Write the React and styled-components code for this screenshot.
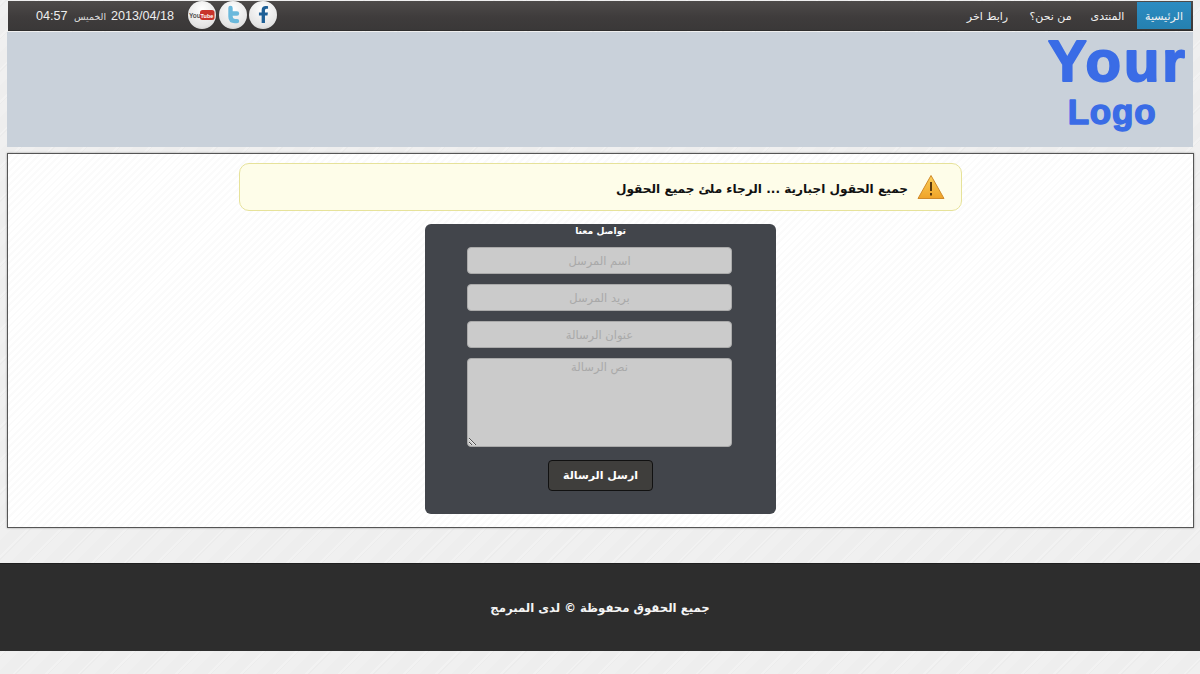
import React from "react";
import styled, { createGlobalStyle } from "styled-components";
import { FaFacebookF } from "react-icons/fa";

const Global = createGlobalStyle`
  html, body { margin: 0; padding: 0; }
  body {
    height: 674px;
    overflow: hidden;
    font-family: "DejaVu Sans", sans-serif;
    background: repeating-linear-gradient(-45deg, #f0f0f0 0 9px, #ececec 9px 10px, #f2f2f2 10px 12px, #eeeeee 12px 23px);
  }
`;
const Page = styled.div`display: flex; flex-direction: column; padding-top: 1px;`;
const TopBar = styled.header`
  height: 30px; margin: 0 7px 0 8px; display: flex; justify-content: space-between; align-items: stretch;
  background: linear-gradient(#4e4b4a, #3f3c3c 55%, #3a3838); border-bottom: 1px solid #2e2d2d; box-sizing: border-box;
`;
const Left = styled.div`display: flex; align-items: center; padding-left: 28px;`;
const Clock = styled.span`font: 12.6px "Liberation Sans", sans-serif; color: #eee; width: 38px; margin-top: 1px;`;
const Day = styled.span`font: 9.5px "DejaVu Sans", sans-serif; color: #ddd; width: 37px; margin-top: 1px;`;
const DateText = styled.span`font: 12.6px "Liberation Sans", sans-serif; color: #eee; width: 77px; margin-top: 1px;`;
const Socials = styled.div`display: flex; gap: 2.5px; margin-top: -2px;`;
const Social = styled.span`
  width: 28px; height: 28px; border-radius: 50%; display: flex; align-items: center; justify-content: center;
  background: radial-gradient(circle at 50% 30%, #fff, #e4e4e4 70%, #bdbdbd); box-shadow: 0 0 1px #222; color: ${p => p.$c};
`;
const Nav = styled.nav`display: flex; align-items: stretch; direction: rtl; padding: 1px 2px 1px 0;`;
const NavItem = styled.a`
  display: flex; align-items: center; justify-content: center; width: ${p => p.$w}px; margin-right: ${p => p.$m || 0}px;
  font: 11px "DejaVu Sans", sans-serif; color: #f2f2f2; white-space: nowrap; padding-top: 2px; box-sizing: border-box;
  background: ${p => (p.$active ? "linear-gradient(#2c8cc2, #2580b0)" : "none")};
`;
const Header = styled.div`
  height: 115px; margin: 1px 7px 0 7px; display: flex; justify-content: flex-end; padding-right: 2px;
  background: #c9d1da;
`;
const LogoArt = styled.svg`display: block; width: 160px; height: 115px;`;
const Main = styled.main`
  height: 375px; box-sizing: border-box; margin: 6px 6px 0 7px; border: 1px solid #555; padding-top: 9px;
  display: flex; flex-direction: column; align-items: center; box-shadow: 0 0 2px #999;
  background: repeating-linear-gradient(-45deg, #fff 0 3px, #fbfbfb 3px 5px);
`;
const Alert = styled.div`
  width: 723px; height: 48px; box-sizing: border-box; border: 1px solid #e6e29a; border-radius: 10px; background: #fefde9;
  display: flex; align-items: center; direction: rtl; padding-right: 16px; gap: 9px;
`;
const AlertText = styled.span`font-size: 12.1px; font-weight: 700; color: #111; padding-top: 3px;`;
const Panel = styled.form`
  width: 351px; height: 290px; box-sizing: border-box; margin-top: 13px; background: #42454b; border-radius: 6px;
  display: flex; flex-direction: column; align-items: center; direction: rtl;
`;
const PanelTitle = styled.div`height: 23px; padding-top: 1px; box-sizing: border-box; font-size: 9.2px; line-height: 12px; font-weight: 700; color: #fff;`;
const fieldCss = `
  width: 265px; box-sizing: border-box; border: 1px solid #aaa; border-radius: 4px; background: #cbcbcb; text-align: center;
  font: 11.5px "DejaVu Sans", sans-serif; padding: 0; outline: none; display: block;
  &::placeholder { color: #a9a9a9; opacity: 1; }
`;
const Input = styled.input`${fieldCss} height: 27px; margin: 0 0 10px 0; margin-right: 2px;`;
const Area = styled.textarea`${fieldCss} height: 89px; padding-top: 1px; resize: vertical; margin: 0; margin-right: 2px;`;
const Send = styled.button`
  width: 105px; height: 31px; margin-top: 13px; box-sizing: border-box; border: 1.5px solid #111; border-radius: 4px;
  background: #3f3e3c; color: #fff; font: 700 11px "DejaVu Sans", sans-serif; padding: 0;
`;
const Footer = styled.footer`
  height: 88px; margin-top: 35px; background: #2d2d2d; display: flex; align-items: center; justify-content: center; direction: rtl;
  border-top: 1px solid #1f1f1f; box-sizing: border-box; color: #f4f4f4; font-size: 11.7px; font-weight: 700;
`;

const TwitterT = () => (
  <svg width="20" height="20" viewBox="0 0 20 20" fill="none" stroke="#6bb9dc" strokeWidth="4.4" strokeLinecap="round">
    <path d="M7.5 3v8.5c0 3 1.6 4.6 4.5 4.6h2M8 8.5h6" />
  </svg>
);
const YouTube = () => (
  <svg width="26" height="14" viewBox="0 0 26 14">
    <text x="0" y="10" fontFamily="Liberation Sans" fontSize="6.5" fontWeight="700" fill="#555">You</text>
    <rect x="11" y="2" width="14.5" height="10" rx="2.5" fill="#c9342c" />
    <text x="11.6" y="9.5" fontFamily="Liberation Sans" fontSize="5.5" fontWeight="700" fill="#fff">Tube</text>
  </svg>
);
const Warn = () => (
  <svg width="28" height="26" viewBox="0 0 28 26">
    <defs>
      <linearGradient id="w" x1="0" y1="0" x2="0" y2="1">
        <stop offset="0" stopColor="#fbcf5a" />
        <stop offset="1" stopColor="#f0a328" />
      </linearGradient>
    </defs>
    <path d="M14 1.5 27 24.5H1Z" fill="url(#w)" stroke="#d08a2a" strokeWidth="1" strokeLinejoin="round" />
    <path d="M14 8v9" stroke="#5a3a10" strokeWidth="2" />
    <path d="M14 19v2.4" stroke="#5a3a10" strokeWidth="2" />
  </svg>
);
const Logo = () => (
  <LogoArt viewBox="0 0 160 115">
    <g fontFamily="Liberation Sans" fontWeight="700" fill="#3a6ce6" stroke="#3a6ce6" strokeLinejoin="round" textAnchor="middle">
      <text x="87" y="49" fontSize="58" strokeWidth="2" letterSpacing="3">Your</text>
      <text x="81" y="92" fontSize="35" strokeWidth="1.4" letterSpacing="0.8">Logo</text>
    </g>
  </LogoArt>
);

export default function App() {
  return (
    <Page>
      <Global />
      <TopBar>
        <Left>
          <Clock>04:57</Clock>
          <Day>الخميس</Day>
          <DateText>2013/04/18</DateText>
          <Socials>
            <Social><YouTube /></Social>
            <Social><TwitterT /></Social>
            <Social $c="#1d5f96"><FaFacebookF size={17} /></Social>
          </Socials>
        </Left>
        <Nav>
          <NavItem $active $w={54}>الرئيسية</NavItem>
          <NavItem $w={31} $m={14}>المنتدى</NavItem>
          <NavItem $w={39} $m={22}>من نحن؟</NavItem>
          <NavItem $w={41} $m={23}>رابط اخر</NavItem>
        </Nav>
      </TopBar>
      <Header>
        <Logo />
      </Header>
      <Main>
        <Alert>
          <Warn />
          <AlertText>جميع الحقول اجبارية ... الرجاء ملئ جميع الحقول</AlertText>
        </Alert>
        <Panel onSubmit={e => e.preventDefault()}>
          <PanelTitle>تواصل معنا</PanelTitle>
          <Input placeholder="اسم المرسل" />
          <Input placeholder="بريد المرسل" />
          <Input placeholder="عنوان الرسالة" />
          <Area placeholder="نص الرسالة" />
          <Send>ارسل الرسالة</Send>
        </Panel>
      </Main>
      <Footer>جميع الحقوق محفوظة © لدى المبرمج</Footer>
    </Page>
  );
}
